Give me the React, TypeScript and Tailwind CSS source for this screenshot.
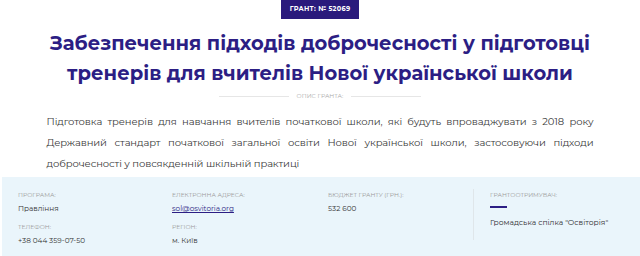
import React from "react";

const font = { fontFamily: "Montserrat, 'DejaVu Sans', 'Open Sans', sans-serif" };

function Label({ children }: { children: React.ReactNode }) {
  return (
    <div className="text-[6px] leading-[9px] uppercase text-[#9a9a9a]">{children}</div>
  );
}

function Value({ children }: { children: React.ReactNode }) {
  return <div className="text-[7.3px] leading-[11px] text-[#333] mt-[3px]">{children}</div>;
}

function JLine({ text }: { text: string }) {
  return (
    <div className="flex justify-between whitespace-nowrap">
      {text.split(" ").map((w, i) => (
        <span key={i}>{w}</span>
      ))}
    </div>
  );
}

export default function App() {
  return (
    <div className="w-[640px] h-[256px] overflow-hidden bg-white flex flex-col items-center" style={font}>
      <div className="shrink-0 h-[19px] px-[9px] bg-[#2a1a7c] text-white text-[6.5px] font-bold flex items-center tracking-[0.3px]">
        ГРАНТ: № 52069
      </div>
      <h1 className="shrink-0 mt-[9px] text-center text-[#2c1e84] font-bold text-[19.5px] leading-[30px] whitespace-nowrap">
        Забезпечення підходів доброчесності у підготовці
        <br />
        тренерів для вчителів Нової української школи
      </h1>
      <div className="shrink-0 mt-[4px] flex items-center gap-[8px]">
        <div className="w-[70px] h-px bg-[#e6e6e6]" />
        <div className="text-[6px] leading-[8px] text-[#aaa] uppercase">Опис гранта:</div>
        <div className="w-[70px] h-px bg-[#e6e6e6]" />
      </div>
      <div className="shrink-0 mt-[11px] w-[547px] text-[10px] tracking-[-0.1px] leading-[21px] text-[#3a3a3a]">
        <JLine text="Підготовка тренерів для навчання вчителів початкової школи, які будуть впроваджувати з 2018 року" />
        <JLine text="Державний стандарт початкової загальної освіти Нової української школи, застосовуючи підходи" />
        <div>доброчесності у повсякденній шкільній практиці</div>
      </div>
      <div className="shrink-0 mt-[3px] self-stretch ml-[2px] flex-1 bg-[#eaf5fb] pt-[14px] pl-[16px]">
        <div className="grid grid-cols-[154px_156px_145px_1fr]">
          <div>
            <Label>Програма:</Label>
            <Value>Правління</Value>
            <div className="mt-[9px]">
              <Label>Телефон:</Label>
              <Value>+38 044 359-07-50</Value>
            </div>
          </div>
          <div>
            <Label>Електронна адреса:</Label>
            <Value>
              <span className="underline text-[#2c1e84]">sol@osvitoria.org</span>
            </Value>
            <div className="mt-[9px]">
              <Label>Регіон:</Label>
              <Value>м. Київ</Value>
            </div>
          </div>
          <div>
            <Label>Бюджет гранту (грн.):</Label>
            <Value>532 600</Value>
          </div>
          <div className="border-l border-[#dfe6ea] pl-[16px] -mt-[2px] pt-[2px] h-[51px]">
            <Label>Грантоотримувач:</Label>
            <div className="mt-[6px] w-[17px] h-[2px] bg-[#2c1e84]" />
            <div className="mt-[9px] text-[7.6px] leading-[11px] text-[#333]">Громадська спілка "Освіторія"</div>
          </div>
        </div>
      </div>
    </div>
  );
}
